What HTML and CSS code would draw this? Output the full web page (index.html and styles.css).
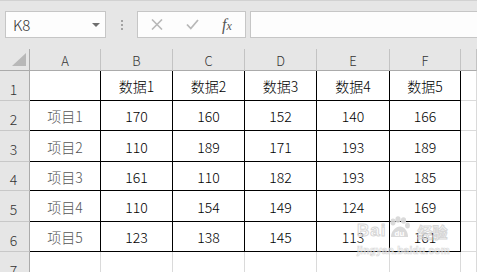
FILE: index.html
```html
<!DOCTYPE html>
<html>
<head>
    <meta charset="utf-8">
    <title>数据表</title>
    <link rel="stylesheet" href="styles.css">
</head>
<body>
<div class="bar">
    <div class="namebox">
        <span>K8</span>
        <i class="drop"></i>
    </div>
    <div class="dots"><b></b><b></b><b></b></div>
    <div class="fxbox">
        <svg class="btn" width="12" height="11" viewBox="0 0 12 11">
            <path d="M1 0.5 L11 10.5 M11 0.5 L1 10.5" stroke="#b8b8b8" stroke-width="1.6" fill="none"/>
        </svg>
        <svg class="btn" width="13" height="11" viewBox="0 0 13 11">
            <path d="M1 5.5 L4.8 9.5 L12 1" stroke="#b8b8b8" stroke-width="1.8" fill="none"/>
        </svg>
        <span class="fx">f<small>x</small></span>
    </div>
    <div class="formula"></div>
</div>

<div class="sheet">
    <div class="corner"><i></i></div>
    <div class="hd">A</div>
    <div class="hd">B</div>
    <div class="hd">C</div>
    <div class="hd">D</div>
    <div class="hd">E</div>
    <div class="hd">F</div>
    <div class="hd"></div>

    <div class="rh">1</div>
    <div class="c t"></div>
    <div class="c t">数据1</div>
    <div class="c t">数据2</div>
    <div class="c t">数据3</div>
    <div class="c t">数据4</div>
    <div class="c t">数据5</div>
    <div class="c"></div>

    <div class="rh">2</div>
    <div class="c t item">项目1</div>
    <div class="c t">170</div>
    <div class="c t">160</div>
    <div class="c t">152</div>
    <div class="c t">140</div>
    <div class="c t">166</div>
    <div class="c"></div>

    <div class="rh">3</div>
    <div class="c t item">项目2</div>
    <div class="c t">110</div>
    <div class="c t">189</div>
    <div class="c t">171</div>
    <div class="c t">193</div>
    <div class="c t">189</div>
    <div class="c"></div>

    <div class="rh">4</div>
    <div class="c t item">项目3</div>
    <div class="c t">161</div>
    <div class="c t">110</div>
    <div class="c t">182</div>
    <div class="c t">193</div>
    <div class="c t">185</div>
    <div class="c"></div>

    <div class="rh">5</div>
    <div class="c t item">项目4</div>
    <div class="c t">110</div>
    <div class="c t">154</div>
    <div class="c t">149</div>
    <div class="c t">124</div>
    <div class="c t">169</div>
    <div class="c"></div>

    <div class="rh">6</div>
    <div class="c t item">项目5</div>
    <div class="c t">123</div>
    <div class="c t">138</div>
    <div class="c t">145</div>
    <div class="c t">113</div>
    <div class="c t">161</div>
    <div class="c"></div>

    <div class="rh">7</div>
    <div class="c"></div>
    <div class="c"></div>
    <div class="c"></div>
    <div class="c"></div>
    <div class="c"></div>
    <div class="c"></div>
    <div class="c"></div>
</div>

<div class="mark">
    <div class="mark-top">
        <span class="bai">Bai</span>
        <svg class="paw" width="24" height="24" viewBox="0 0 24 24">
            <ellipse cx="6" cy="6" rx="2.6" ry="3.4" fill="#d6d6d6"/>
            <ellipse cx="11" cy="3.5" rx="2.6" ry="3.2" fill="#d6d6d6"/>
            <ellipse cx="16.5" cy="4.5" rx="2.6" ry="3.2" fill="#d6d6d6"/>
            <ellipse cx="20.5" cy="9.5" rx="2.4" ry="3" fill="#d6d6d6"/>
            <path d="M4 21 C4 15 9 10.5 13 10.5 C18 10.5 21 16 21 21 Z" fill="#d6d6d6"/>
            <text x="12.5" y="20" font-size="8" font-family="Liberation Sans" font-weight="bold" fill="#fff" text-anchor="middle">du</text>
        </svg>
        <span class="jy">经验</span>
    </div>
    <div class="mark-url">jingyan.baidu.com</div>
</div>
</body>
</html>
```

FILE: styles.css
```css
html, body {
    overflow: hidden;
}

body {
    margin: 0;
    background: #fff;
    font: 300 14px "Noto Sans CJK SC", "Liberation Sans", sans-serif;
    color: #000;
}

/* 名称框与编辑栏 */
.bar {
    display: flex;
    align-items: flex-start;
    height: 49px;
    box-sizing: border-box;
    padding: 10px 0 0 5px;
    background: #e6e6e6;
    border-top: 1px solid #d2d2d2;
}

.namebox {
    display: flex;
    align-items: center;
    justify-content: space-between;
    width: 101px;
    height: 27px;
    box-sizing: border-box;
    padding: 0 5px 0 7px;
    background: #fdfdfd;
    border: 1px solid #c6c6c6;
    font-size: 15px;
    color: #333;
}

.namebox span {
    line-height: 25px;
}

.drop {
    width: 0;
    height: 0;
    border-left: 4px solid transparent;
    border-right: 4px solid transparent;
    border-top: 4px solid #6e6e6e;
    margin-top: 1px;
}

.dots {
    display: flex;
    flex-direction: column;
    gap: 2px;
    margin: 9px 0 0 15px;
}

.dots b {
    width: 2px;
    height: 2px;
    background: #a3a3a3;
}

.fxbox {
    display: flex;
    align-items: center;
    width: 109px;
    height: 27px;
    box-sizing: border-box;
    margin-left: 14px;
    padding-left: 13px;
    background: #fdfdfd;
    border: 1px solid #c6c6c6;
}

.fxbox .btn {
    margin-right: 23px;
}

.fx {
    font: italic 16px "Liberation Serif", serif;
    color: #555;
    line-height: 1;
}

.fx small {
    font-size: 12px;
}

.formula {
    flex: 1;
    height: 27px;
    box-sizing: border-box;
    margin: 0 -10px 0 4px;
    background: #fdfdfd;
    border: 1px solid #c6c6c6;
}

/* 表格区域 */
.sheet {
    display: grid;
    grid-template-columns: 30px 71px 72px 72px 72px 73px 71px 1fr;
    grid-template-rows: 22px 30px 30px 31px 29px 31px 30px 30px;
}

.sheet > div {
    box-sizing: border-box;
}

.corner {
    position: relative;
    background: #e6e6e6;
    border-right: 1px solid #ababab;
    border-bottom: 1px solid #ababab;
}

.corner i {
    position: absolute;
    right: 3px;
    bottom: 4px;
    width: 0;
    height: 0;
    border-left: 14px solid transparent;
    border-bottom: 13px solid #b8b8b8;
}

.hd {
    display: flex;
    align-items: center;
    justify-content: center;
    background: #e6e6e6;
    border-right: 1px solid #c3c3c3;
    border-bottom: 1px solid #ababab;
    font-size: 13px;
    color: #333;
    padding-top: 1px;
}

.rh {
    display: flex;
    align-items: center;
    justify-content: center;
    background: #e6e6e6;
    border-right: 1px solid #ababab;
    border-bottom: 1px solid #c8c8c8;
    font-size: 14px;
    color: #333;
    padding: 6px 2px 0 0;
}

.c {
    display: flex;
    align-items: center;
    justify-content: center;
    border-right: 1px solid #dadada;
    border-bottom: 1px solid #dadada;
    padding-top: 1px;
}

.c.t {
    border-right-color: #000;
    border-bottom-color: #000;
}

.item {
    color: #555;
}

/* 右下角水印 */
.mark {
    position: absolute;
    left: 357px;
    top: 216px;
    opacity: 0.9;
    color: #d8d8d8;
}

.mark-top {
    display: flex;
    align-items: flex-end;
}

.bai {
    font: bold 17px/1 "Liberation Sans", sans-serif;
    color: rgba(255, 255, 255, 0.4);
    -webkit-text-stroke: 1px #d2d2d2;
    letter-spacing: 1px;
    margin-bottom: 1px;
}

.paw {
    margin: 0 6px 0 1px;
}

.jy {
    font: bold 15px/1 "Noto Sans CJK SC", sans-serif;
    color: rgba(255, 255, 255, 0.4);
    -webkit-text-stroke: 1px #d2d2d2;
    margin-bottom: 1px;
}

.mark-url {
    font: bold 10px/1 "Liberation Sans", sans-serif;
    color: rgba(255, 255, 255, 0.5);
    -webkit-text-stroke: 0.6px #d4d4d4;
    margin-top: 6px;
    letter-spacing: 0.3px;
}
```
